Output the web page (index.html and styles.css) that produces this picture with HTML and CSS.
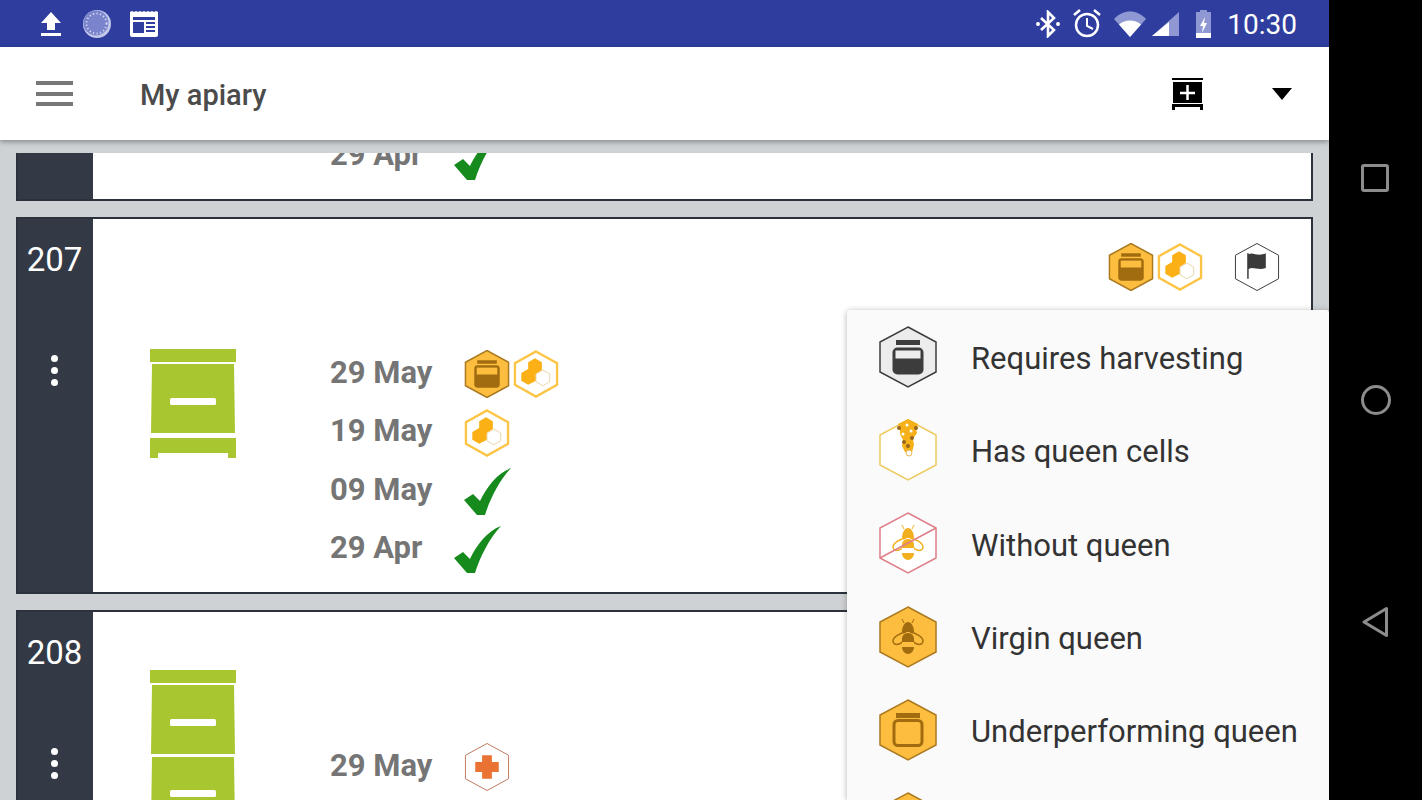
FILE: index.html
```html
<!DOCTYPE html>
<html lang="en">
<head>
  <meta charset="UTF-8">
  <meta name="viewport" content="width=device-width, initial-scale=1.0">
  <title>My apiary</title>
  <link rel="stylesheet" href="styles.css">
</head>
<body>

  <!-- Shared icons -->
  <svg class="defs" aria-hidden="true">
    <symbol id="check" viewBox="0 0 47 47">
      <path fill="#168a1c" d="M0 32 L9 26 L16 33 C22 20 33 5 47 0 C35 13 26 31 21 47 L13 47 Z"/>
    </symbol>
    <symbol id="hive" viewBox="0 0 86 109">
      <path fill="#a8c62f" d="M0 0H86V13H0Z M2 15H84L85 84H1Z M0 89H86V109H78V104H8V109H0Z"/>
      <rect x="20" y="49" width="46" height="7" rx="1.5" fill="#fff"/>
    </symbol>
    <symbol id="hive-double" viewBox="0 0 86 180">
      <path fill="#a8c62f" d="M0 0H86V13H0Z M2 15H84L85 84H1Z M2 87H84L85 155H1Z M0 160H86V180H0Z"/>
      <rect x="20" y="49" width="46" height="7" rx="1.5" fill="#fff"/>
      <rect x="20" y="120" width="46" height="7" rx="1.5" fill="#fff"/>
    </symbol>
    <symbol id="hex-jar-full" viewBox="1 0.5 46 49">
      <path fill="#fdbd3f" stroke="#ab7a20" stroke-width="1.5" d="M24 1 46 13V37L24 49 2 37V13Z"/>
      <rect x="14" y="11" width="20" height="3.5" fill="#a16c10"/>
      <rect x="11" y="16" width="26" height="23" rx="3.5" fill="#a16c10"/>
      <rect x="13.5" y="18.5" width="21" height="7" fill="#fdbd3f"/>
    </symbol>
    <symbol id="hex-comb" viewBox="1 0.5 46 49">
      <path fill="#fff" stroke="#fdc445" stroke-width="2.4" d="M24 2 45.500 14V36L24 48 2.500 36V14Z"/>
      <path fill="#fbb116" d="M23 9 30 13V21L24 25V32L16 36 9 32V24L16 20V13Z"/>
      <path fill="#fff" stroke="#e9d6a8" stroke-width="1" d="M31 21 38 25V33L31 37 24 33V25Z"/>
    </symbol>
    <symbol id="hex-flag" viewBox="1 0.5 46 49">
      <path fill="#fff" stroke="#3a3a3a" stroke-width="1" d="M24 1 46 13V37L24 49 2 37V13Z"/>
      <path fill="#3a3a3a" d="M14 11H15.500V37H14Z M15.500 12C20 9 24 15 33 11V26C25 29 20 24 15.500 27Z"/>
    </symbol>
    <symbol id="hex-cross" viewBox="1 0.5 46 49">
      <path fill="#fff" stroke="#c0785c" stroke-width="1" d="M24 1 46 13V37L24 49 2 37V13Z"/>
      <path fill="#ea7334" d="M19 13H29V20H36V30H29V37H19V30H12V20H19Z"/>
    </symbol>
    <symbol id="hex-jar-grey" viewBox="0 0 58 62">
      <path fill="#ececec" stroke="#3c3c3c" stroke-width="1.500" d="M29 1 57 16V46L29 61 1 46V16Z"/>
      <rect x="17" y="14" width="24" height="5" fill="#3c3c3c"/>
      <rect x="13.500" y="21.500" width="31" height="27" rx="5" fill="#3c3c3c"/>
      <rect x="16.500" y="24.500" width="25" height="8" fill="#ececec"/>
    </symbol>
    <symbol id="hex-cells" viewBox="0 0 58 62">
      <path fill="#fff" stroke="#edcb5f" stroke-width="1.500" d="M29 1 57 16V46L29 61 1 46V16Z"/>
      <path fill="#f6b11a" d="M29 0 39 5 37 10 38 14 34 20 35 26 33 33H26L23 27 24 21 21 15 21 9 19 5Z"/>
      <circle cx="20" cy="9" r="2" fill="#93661a"/>
      <circle cx="37" cy="9" r="2" fill="#93661a"/>
      <circle cx="33" cy="19" r="2" fill="#93661a"/>
      <circle cx="25" cy="23" r="2" fill="#93661a"/>
      <circle cx="29" cy="27" r="2" fill="#93661a"/>
      <circle cx="28" cy="6" r="1.500" fill="#fff"/>
      <circle cx="32" cy="12" r="1.500" fill="#fff"/>
      <circle cx="24" cy="15" r="1.500" fill="#fff"/>
      <circle cx="30" cy="34" r="3" fill="#fff" stroke="#e9b64e"/>
    </symbol>
    <symbol id="bee" viewBox="0 0 58 62">
      <path fill="none" stroke="currentColor" stroke-width="1" d="M25 17 23 13M33 17 35 13"/>
      <path fill="currentColor" d="M23 26C23 20 26 16 29 16 32 16 35 20 35 26Z"/>
      <path fill="none" stroke="currentColor" stroke-width="1.500" d="M27 26C21 27 14 31 14 35 14 38 17 39 20 38 23 37 25 34 26 31M31 26C37 27 44 31 44 35 44 38 41 39 38 38 35 37 33 34 32 31"/>
      <path fill="currentColor" d="M23 33C23 29 26 27 29 27 32 27 35 29 35 33V41C35 45 32 48 29 48 26 48 23 45 23 41Z"/>
      <rect class="bee-band" x="23" y="36" width="12" height="5"/>
    </symbol>
    <symbol id="hex-noqueen" viewBox="0 0 58 62">
      <path fill="#fff" stroke="#de7f88" stroke-width="1.500" d="M29 1 57 16V46L29 61 1 46V16Z"/>
    </symbol>
    <symbol id="hex-jar-empty" viewBox="0 0 58 62">
      <path fill="#fdbd3f" stroke="#ab7a20" stroke-width="1.500" d="M29 1 57 16V46L29 61 1 46V16Z"/>
      <rect x="17" y="14" width="24" height="5" fill="#a16c10"/>
      <rect x="15" y="21.500" width="28" height="25" rx="4" fill="none" stroke="#a16c10" stroke-width="3"/>
    </symbol>
    <symbol id="hex-amber" viewBox="0 0 58 62">
      <path fill="#fdbd3f" stroke="#ab7a20" stroke-width="1.500" d="M29 1 57 16V46L29 61 1 46V16Z"/>
    </symbol>
  </svg>

  <div class="screen">
    <div class="app">

      <!-- Status bar -->
      <div class="status-bar">
        <svg class="st-upload" width="24" height="26" viewBox="0 0 24 26"><path fill="#fff" d="M12 1 22 12H16V19H8V12H2Z M2 22H22V25H2Z"/></svg>
        <svg class="st-spinner" width="28" height="28" viewBox="0 0 28 28">
          <circle cx="14" cy="14" r="14" fill="#c4c9ea"/>
          <circle cx="13" cy="13" r="12.500" fill="#7a84cc"/>
          <circle cx="13.500" cy="13.500" r="10" fill="none" stroke="#d6daf2" stroke-width="2" stroke-dasharray="1.200 2.400"/>
        </svg>
        <svg class="st-calendar" width="28" height="26" viewBox="0 0 28 26">
          <path fill="#fff" d="M0 1 2 0 4 1 6 0 8 1 10 0 12 1 14 0 16 1 18 0 20 1 22 0 24 1 26 0 28 1V24Q28 26 26 26H2Q0 26 0 24Z"/>
          <path fill="#303f9f" d="M3 6H25V9H3Z M3 11H14V22H3Z M16 11H25V13H16Z M16 15H25V17H16Z M16 19H25V21H16Z"/>
        </svg>
        <svg class="st-bluetooth" width="24" height="28" viewBox="0 0 24 28">
          <path fill="none" stroke="#fff" stroke-width="2.600" d="M5 8 18 20 12 26V2L18 8 5 20"/>
          <circle cx="2" cy="14" r="2" fill="#fff"/>
          <circle cx="22" cy="14" r="2" fill="#fff"/>
        </svg>
        <svg class="st-alarm" width="28" height="29" viewBox="0 0 28 29">
          <circle cx="14" cy="16" r="11" fill="none" stroke="#fff" stroke-width="2.500"/>
          <path fill="none" stroke="#fff" stroke-width="2" d="M14 9V17L20 20"/>
          <path fill="none" stroke="#fff" stroke-width="2.500" d="M1 6 7 1M27 6 21 1"/>
        </svg>
        <svg class="st-wifi" width="32" height="26" viewBox="0 0 32 26">
          <path fill="#8f98d2" d="M0 8C9 -2 23 -2 32 8L16 26Z"/>
          <path fill="#fff" d="M5 13.500C11 8 21 8 27 13.500L16 26Z"/>
        </svg>
        <svg class="st-signal" width="27" height="24" viewBox="0 0 27 24">
          <path fill="#8f98d2" d="M27 0V24H0Z"/>
          <path fill="#fff" d="M17 10V24H0L0 24Z"/>
        </svg>
        <svg class="st-battery" width="17" height="28" viewBox="0 0 17 28">
          <path fill="#8f98d2" d="M5 0H12V2H16V28H1V2H5Z"/>
          <path fill="#fff" d="M1 23H16V28H1Z"/>
          <path fill="#fff" d="M10 7 5 16H8L7 23 12 13H9Z"/>
        </svg>
        <span class="clock">10:30</span>
      </div>

      <!-- App bar -->
      <header class="app-bar">
        <svg class="menu-icon" width="37" height="25" viewBox="0 0 37 25"><path fill="#777" d="M0 0H37V4H0Z M0 11H37V15H0Z M0 21H37V25H0Z"/></svg>
        <h1 class="title">My apiary</h1>
        <svg class="add-icon" width="31" height="32" viewBox="0 0 31 32">
          <path fill="#000" d="M0 0H31V2H0Z M1 4H30V25H1Z M0 26H31V32H28V29H3V32H0Z"/>
          <path fill="#fff" d="M14.250 7H16.750V13.750H23V16.250H16.750V22H14.250V16.250H8V13.750H14.250Z"/>
        </svg>
        <svg class="caret-icon" width="20" height="12" viewBox="0 0 20 12"><path fill="#000" d="M0 0H20L10 12Z"/></svg>
      </header>

      <!-- Hive list -->
      <main class="content">
        <div class="list">

          <div class="card card-clipped">
            <div class="card-side"></div>
            <div class="card-body">
              <div class="hive-row">
                <div class="hive-spacer"></div>
                <div class="dates">
                  <div class="date-row"><span class="date">29 Apr</span><svg class="check"><use href="#check"/></svg></div>
                </div>
              </div>
            </div>
          </div>

          <div class="card">
            <div class="card-side">
              <span class="hive-no">207</span>
              <span class="dots"><i></i><i></i><i></i></span>
            </div>
            <div class="card-body">
              <div class="top-icons">
                <div class="hex-group">
                  <svg class="hex"><use href="#hex-jar-full"/></svg>
                  <svg class="hex"><use href="#hex-comb"/></svg>
                </div>
                <svg class="hex"><use href="#hex-flag"/></svg>
              </div>
              <div class="hive-row">
                <svg class="hive"><use href="#hive"/></svg>
                <div class="dates">
                  <div class="date-row">
                    <span class="date">29 May</span>
                    <div class="hex-group">
                      <svg class="hex"><use href="#hex-jar-full"/></svg>
                      <svg class="hex"><use href="#hex-comb"/></svg>
                    </div>
                  </div>
                  <div class="date-row"><span class="date">19 May</span><svg class="hex"><use href="#hex-comb"/></svg></div>
                  <div class="date-row"><span class="date">09 May</span><svg class="check"><use href="#check"/></svg></div>
                  <div class="date-row"><span class="date">29 Apr</span><svg class="check"><use href="#check"/></svg></div>
                </div>
              </div>
            </div>
          </div>

          <div class="card card-open">
            <div class="card-side">
              <span class="hive-no">208</span>
              <span class="dots"><i></i><i></i><i></i></span>
            </div>
            <div class="card-body">
              <div class="hive-row">
                <svg class="hive hive-tall"><use href="#hive-double"/></svg>
                <div class="dates dates-low">
                  <div class="date-row"><span class="date">29 May</span><svg class="hex"><use href="#hex-cross"/></svg></div>
                </div>
              </div>
            </div>
          </div>

        </div>
      </main>
    </div>

    <!-- Navigation bar -->
    <nav class="nav-bar">
      <svg width="32" height="32" viewBox="0 0 32 32"><rect x="2.500" y="3.500" width="25" height="25" rx="1.500" fill="none" stroke="#8c8c8c" stroke-width="3"/></svg>
      <svg width="32" height="32" viewBox="0 0 32 32"><circle cx="16" cy="16" r="13.500" fill="none" stroke="#8c8c8c" stroke-width="3"/></svg>
      <svg width="32" height="32" viewBox="0 0 32 32"><path d="M26.500 2.500V29.500L4 16Z" fill="none" stroke="#8c8c8c" stroke-width="3" stroke-linejoin="round"/></svg>
    </nav>

    <!-- Status popup -->
    <div class="popup">
      <div class="popup-row"><svg class="popup-hex"><use href="#hex-jar-grey"/></svg><span>Requires harvesting</span></div>
      <div class="popup-row"><svg class="popup-hex"><use href="#hex-cells"/></svg><span>Has queen cells</span></div>
      <div class="popup-row">
        <svg class="popup-hex bee-yellow">
          <use href="#hex-noqueen"/>
          <use href="#bee"/>
          <path d="M1 46 57 16" stroke="#de7f88" stroke-width="1.500"/>
        </svg>
        <span>Without queen</span>
      </div>
      <div class="popup-row">
        <svg class="popup-hex bee-brown">
          <use href="#hex-amber"/>
          <use href="#bee"/>
        </svg>
        <span>Virgin queen</span>
      </div>
      <div class="popup-row"><svg class="popup-hex"><use href="#hex-jar-empty"/></svg><span>Underperforming queen</span></div>
      <div class="popup-row"><svg class="popup-hex"><use href="#hex-amber"/></svg></div>
    </div>
  </div>

</body>
</html>
```

FILE: styles.css
```css
html, body {
  margin: 0;
  padding: 0;
}

body {
  font-family: 'Roboto', sans-serif;
  background: #000;
}

.defs {
  position: absolute;
  width: 0;
  height: 0;
}

.screen {
  position: relative;
  display: flex;
  width: 1422px;
  height: 800px;
  overflow: hidden;
}

.app {
  display: flex;
  flex-direction: column;
  width: 1329px;
  height: 800px;
}

/* Status bar */
.status-bar {
  display: flex;
  align-items: center;
  flex-shrink: 0;
  height: 47px;
  padding: 0 32px 0 39px;
  box-sizing: border-box;
  background-color: #2f3e9e;
  color: #fff;
}

.st-spinner { margin-left: 20px; }
.st-calendar { margin-left: 19px; }
.st-bluetooth { margin-left: auto; }
.st-alarm { margin-left: 13px; }
.st-wifi { margin-left: 13px; }
.st-signal { margin-left: 6px; }
.st-battery { margin-left: 16px; }

.clock {
  margin-left: 15px;
  padding-top: 2px;
  font-size: 28px;
}

/* App bar */
.app-bar {
  position: relative;
  z-index: 2;
  display: flex;
  align-items: center;
  flex-shrink: 0;
  height: 93px;
  padding: 0 37px 0 36px;
  box-sizing: border-box;
  background-color: #fff;
  box-shadow: 0 2px 5px rgba(0, 0, 0, 0.35);
}

.title {
  margin: 2px 0 0 67px;
  font-size: 29px;
  font-weight: 500;
  color: #4b4b4b;
}

.add-icon {
  margin-left: auto;
}

.caret-icon {
  margin-left: 69px;
}

/* List */
.content {
  flex: 1;
  min-height: 0;
  padding-top: 13px;
  background-color: #cfd2d4;
}

.list {
  height: 100%;
  padding: 0 16px;
  overflow: hidden;
}

.card {
  display: flex;
  margin-bottom: 16px;
  border: 2px solid #2b323b;
  background-color: #fff;
}

.card-clipped {
  margin-top: -36px;
  height: 84px;
  box-sizing: border-box;
}

.card-clipped .card-body {
  justify-content: flex-end;
  padding-bottom: 13px;
}

.card-side {
  display: flex;
  flex-direction: column;
  align-items: center;
  flex-shrink: 0;
  width: 73px;
  padding-right: 2px;
  background-color: #333a45;
  color: #fff;
}

.hive-no {
  margin-top: 22px;
  font-size: 33px;
  line-height: 38px;
}

.dots {
  display: flex;
  flex-direction: column;
  gap: 5px;
  margin-top: 76px;
}

.dots i {
  display: block;
  width: 7px;
  height: 7px;
  border-radius: 50%;
  background-color: #fff;
}

.card-body {
  display: flex;
  flex-direction: column;
  flex: 1;
  padding-bottom: 13px;
}

.top-icons {
  display: flex;
  justify-content: flex-end;
  gap: 31px;
  margin-top: 24px;
  margin-bottom: 54px;
  padding-right: 31px;
}

.hex-group {
  display: flex;
  gap: 3px;
}

.hex {
  display: block;
  width: 46px;
  height: 48px;
}

.hive-row {
  display: flex;
  align-items: flex-start;
  padding-left: 57px;
}

.hive {
  flex-shrink: 0;
  width: 86px;
  height: 109px;
  margin-top: 4px;
}

.hive-tall {
  height: 180px;
  margin-top: 0;
}

.hive-spacer {
  flex-shrink: 0;
  width: 86px;
}

.dates {
  margin-left: 94px;
}

.card-open .hive-row {
  padding-top: 58px;
}

.dates-low {
  margin-top: 68px;
}

.date-row {
  display: flex;
  align-items: center;
  gap: 32px;
  height: 58.5px;
}

.date {
  font-size: 31px;
  font-weight: 700;
  color: #757575;
  position: relative;
  top: -2px;
}

.check {
  width: 47px;
  height: 47px;
}

/* Navigation bar */
.nav-bar {
  display: flex;
  flex-direction: column;
  align-items: center;
  justify-content: center;
  gap: 190px;
  width: 93px;
  background-color: #000;
}

/* Popup menu */
.popup {
  position: absolute;
  top: 310px;
  left: 847px;
  width: 482px;
  height: 490px;
  overflow: hidden;
  border-radius: 3px 3px 0 0;
  background-color: #fafafa;
  box-shadow: 0 1px 6px rgba(0, 0, 0, 0.3);
}

.popup-row {
  display: flex;
  align-items: center;
  gap: 34px;
  height: 93.3px;
  padding-left: 32px;
  font-size: 31px;
  color: #333;
}

.popup-row span {
  padding-top: 4px;
}

.popup-hex {
  flex-shrink: 0;
  width: 58px;
  height: 62px;
}

.bee-band {
  fill: var(--band);
}

.bee-yellow {
  color: #f2b01e;
  --band: #fff;
}

.bee-brown {
  color: #a16c10;
  --band: #fdbd3f;
}
```
